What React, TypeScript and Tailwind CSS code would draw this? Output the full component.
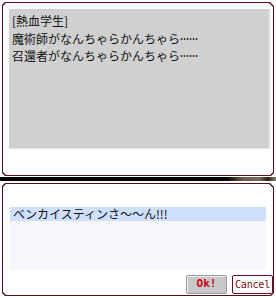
import React from "react";

const chamfer =
  "[clip-path:polygon(3px_0,calc(100%-4px)_0,100%_4px,100%_calc(100%-3px),calc(100%-3px)_100%,3px_100%,0_calc(100%-3px),0_3px)]";

function Dots() {
  return (
    <span className="inline-block w-[24px] mr-[-6px] scale-x-[0.75] origin-left font-bold">……</span>
  );
}

export default function App() {
  return (
    <div
      className="w-[276px] h-[298px] bg-white flex flex-col overflow-hidden"
      style={{ fontFamily: '"Noto Sans CJK JP", "DejaVu Sans", sans-serif' }}
    >
      {/* top panel */}
      <div className={`mt-[2px] ml-[2px] w-[272px] h-[174px] bg-[#5a0c18] p-px ${chamfer}`}>
        <div className={`w-full h-full bg-white pt-[6px] pl-[6px] ${chamfer}`}>
          <div className="w-[261px] h-[140px] bg-[#d0d0d0] border-t border-[#d8c8cc] border-r-2 border-r-[#dcdcdc] border-b border-b-[#e4e4e4] pl-[3px] pt-[2px] text-[12px] leading-[17.5px] text-[#111]">
            <div>[熱血学生]</div>
            <div className="whitespace-nowrap">
              魔術師がなんちゃらかんちゃら<Dots />
            </div>
            <div className="whitespace-nowrap">
              召還者がなんちゃらかんちゃら<Dots />
            </div>
          </div>
        </div>
      </div>

      {/* separator */}
      <div className="mt-[1px] h-[4px] w-[276px] bg-[linear-gradient(to_right,#000_0%,#000_82%,#6b5c48_88%,#7a6a55_94%,#2a2016_97%,#8a8070_100%)]" />

      {/* bottom panel */}
      <div className={`mt-[2px] ml-[2px] w-[272px] h-[113px] bg-[#5a0c18] p-px ${chamfer}`}>
        <div className={`w-full h-full bg-white flex flex-col ${chamfer}`}>
          <div className="ml-[7px] mt-[23px] w-[256px] h-[63px] bg-[#f6f7fa] flex flex-col">
            <div className="h-[14px] bg-[#cfe0ff] pl-[3px] text-[12px] leading-[14px] text-[#111] whitespace-nowrap">
              ベンカイスティンさ〜〜ん!!!
            </div>
          </div>
          <div className="flex justify-end gap-[5px] mt-[5px] pr-[0px]">
            <div
              className="w-[41px] h-[19px] bg-[#c8c8c8] border border-[#9a9a9a] rounded-[2px] flex items-center justify-center text-[11px] font-bold text-[#cc0010] shadow-[inset_1px_1px_0_#eee]"
              style={{ fontFamily: '"DejaVu Sans Mono", monospace' }}
            >
              Ok!
            </div>
            <div
              className="w-[41px] h-[19px] bg-white border border-[#6a1020] rounded-[2px] flex items-center justify-center text-[10px] tracking-[-0.2px] text-[#701020]"
              style={{ fontFamily: '"DejaVu Sans Mono", monospace' }}
            >
              Cancel
            </div>
          </div>
        </div>
      </div>
    </div>
  );
}
